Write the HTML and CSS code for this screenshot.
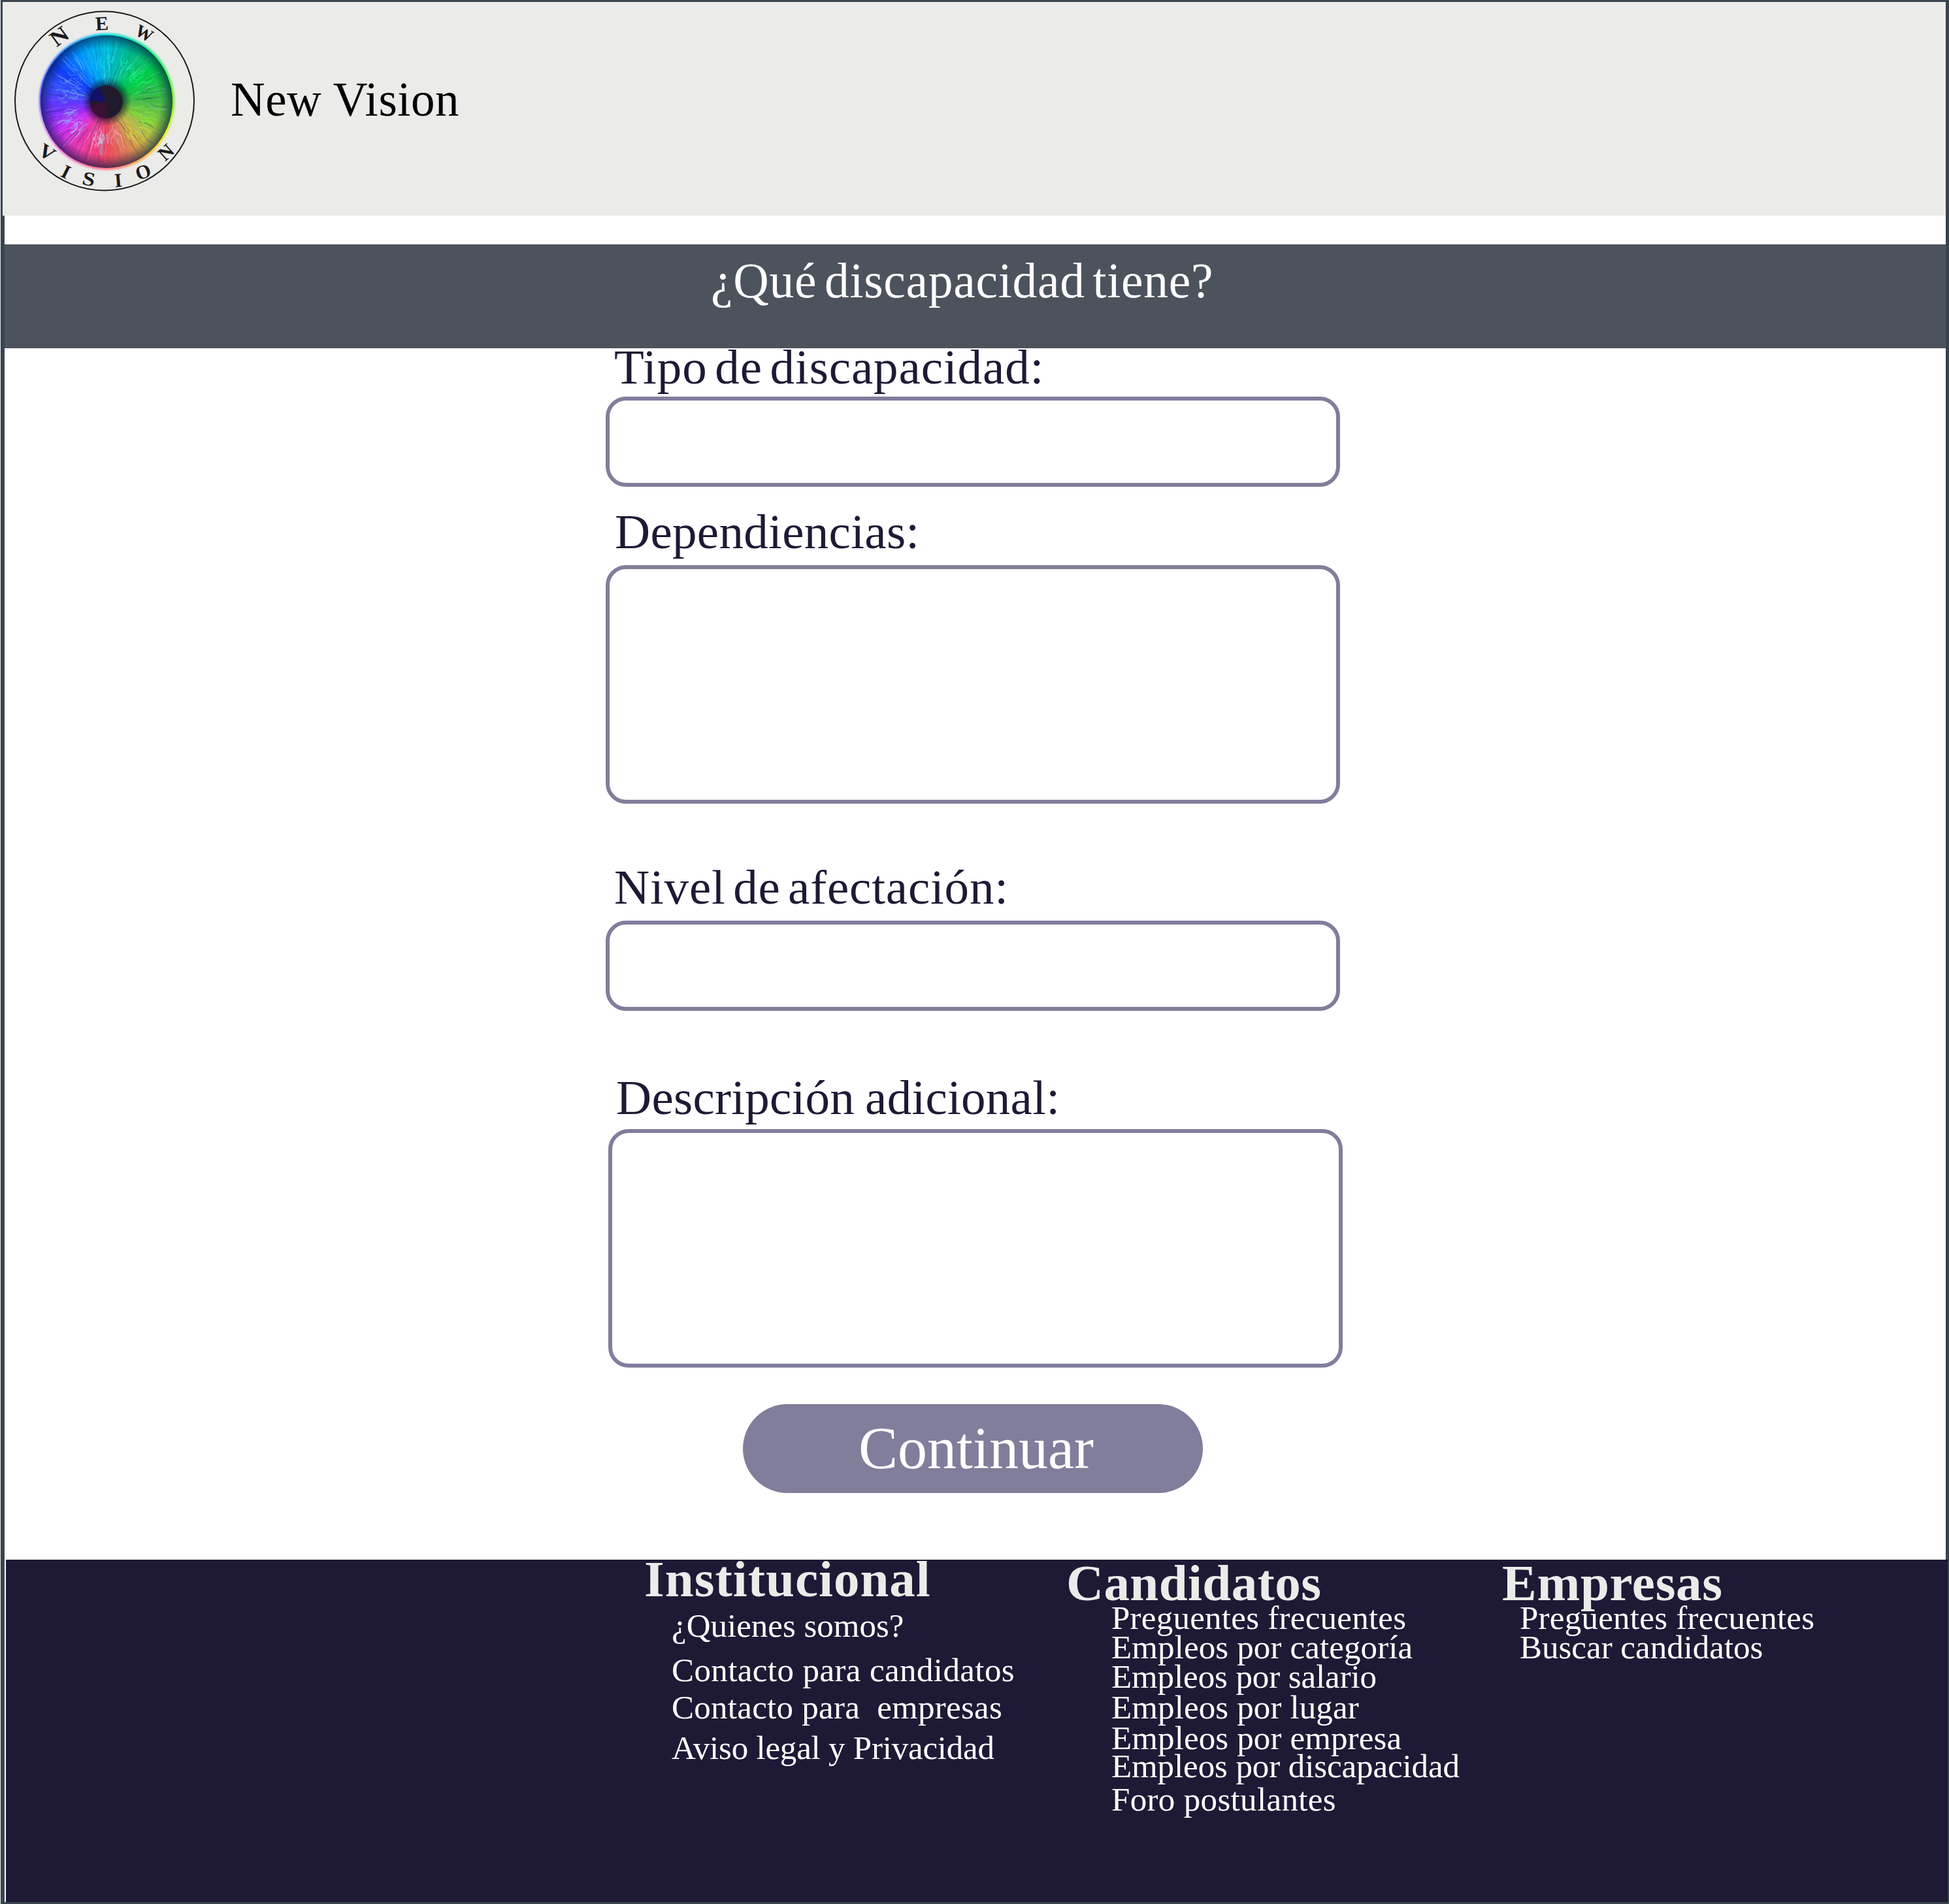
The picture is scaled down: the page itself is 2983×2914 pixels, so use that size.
FILE: index.html
```html
<!DOCTYPE html>
<html lang="es">
<head>
<meta charset="utf-8">
<title>New Vision</title>
<link rel="stylesheet" href="styles.css">
</head>
<body>
<div class="page">
  <header class="header">
    <div class="logo">
      <div class="iris-glow"></div>
      <div class="iris"></div>
      <svg class="logo-art" viewBox="0 0 316 327">
        <g id="fibres" class="fibres" fill="none" stroke-linecap="round"></g>
        <circle cx="158.500" cy="153" r="25" fill="#201a2c"/>
        <path d="M158.500 153L133.500 151A25 25 0 0 1 148 130Z" fill="#14106a"/>
        <path d="M158.500 153L160 178A25 25 0 0 1 134 158Z" fill="#3a1034"/>
        <circle cx="156" cy="151.500" r="137" fill="none" stroke="#1a1a1a" stroke-width="2"/>
        <g class="ring-text">
          <text transform="translate(87 53) rotate(-36) scale(1.1 1)" y="11" font-size="34">N</text>
          <text transform="translate(152 33) rotate(-3)" y="10">E</text>
          <text transform="translate(217 48) rotate(28)" y="9" font-size="27">W</text>
          <text transform="translate(68 230) rotate(33) scale(1.1 1)" y="10">V</text>
          <text transform="translate(97 260) rotate(27)" y="10">I</text>
          <text transform="translate(132 271) rotate(12) scale(1.15 1)" y="10">S</text>
          <text transform="translate(177 273) rotate(-5)" y="10">I</text>
          <text transform="translate(215 260) rotate(-20)" y="10">O</text>
          <text transform="translate(250 230) rotate(-42)" y="10">N</text>
        </g>
      </svg>
    </div>
    <div class="brand">New Vision</div>
  </header>
  <main class="main">
    <h1 class="title">¿Qué discapacidad tiene?</h1>
    <form class="form">
      <label class="label label-type" for="tipo">Tipo de discapacidad:</label>
      <input class="field" id="tipo">
      <label class="label label-deps" for="dep">Dependiencias:</label>
      <textarea class="field field-tall" id="dep"></textarea>
      <label class="label label-level" for="nivel">Nivel de afectación:</label>
      <input class="field" id="nivel">
      <label class="label label-desc" for="desc">Descripción adicional:</label>
      <textarea class="field field-tall field-desc" id="desc"></textarea>
      <button class="submit" type="button">Continuar</button>
    </form>
  </main>
  <footer class="footer">
    <section class="col col-inst">
      <h2>Institucional</h2>
      <ul>
        <li>¿Quienes somos?</li>
        <li>Contacto para candidatos</li>
        <li>Contacto para&nbsp; empresas</li>
        <li>Aviso legal y Privacidad</li>
      </ul>
    </section>
    <section class="col col-cand">
      <h2>Candidatos</h2>
      <ul>
        <li>Preguentes frecuentes</li>
        <li>Empleos por categoría</li>
        <li>Empleos por salario</li>
        <li>Empleos por lugar</li>
        <li>Empleos por empresa</li>
        <li>Empleos por discapacidad</li>
        <li>Foro postulantes</li>
      </ul>
    </section>
    <section class="col col-emp">
      <h2>Empresas</h2>
      <ul>
        <li>Preguentes frecuentes</li>
        <li>Buscar candidatos</li>
      </ul>
    </section>
  </footer>
</div>
<script src="iris.js"></script>
</body>
</html>
```
FILE: styles.css
```css
* { box-sizing: border-box; }
body {
  margin: 0;
  font-family: "Liberation Serif", serif;
  background: #39444f;
}
.page {
  width: 2983px;
  height: 2914px;
  padding-top: 3px;
  border-left: 1px solid #e6eeee;
  overflow: hidden;
  background: #39444f;
}
.header {
  display: flex;
  height: 327px;
  margin: 0 5px 0 3px;
  background: #ebebe9;
}
.logo {
  position: relative;
  width: 316px;
  height: 327px;
  flex: none;
}
.logo-art { position: absolute; inset: 0; width: 316px; height: 327px; }
.fibres { filter: blur(.5px); }
.iris-glow, .iris {
  position: absolute;
  border-radius: 50%;
}
.iris-glow {
  left: 56px;
  top: 48px;
  width: 207px;
  height: 209px;
  filter: blur(1.5px);
  background: conic-gradient(#00e0e0, #20f080 45deg, #80f020 90deg, #f0f000 120deg, #ffb040 145deg, #ff7080 180deg, #ff60d0 225deg, #c080ff 252deg, #3030ff 285deg, #2090ff 325deg, #00e0e0);
}
.iris {
  left: 58px;
  top: 51px;
  width: 202px;
  height: 203px;
  background:
    radial-gradient(circle, rgba(10, 10, 40, .7) 24px, rgba(10, 10, 60, 0) 38px, rgba(0, 20, 60, 0) 82px, rgba(0, 20, 70, .3) 92px, rgba(0, 25, 70, .65) 101px),
    conic-gradient(#00bcd8, #00b890 25deg, #00cc48 55deg, #38bc44 85deg, #84c83c 112deg, #ccb444 138deg, #e47454 160deg, #f04464 182deg, #ec38ac 212deg, #cc2cf4 238deg, #7030fc 262deg, #3850ff 285deg, #1040ff 305deg, #00a0fc 335deg, #00bcd8);
}
.ring-text {
  font-family: "Liberation Serif", serif;
  font-weight: 700;
  font-size: 30px;
  fill: #1a1a1a;
  text-anchor: middle;
}
.brand {
  padding-top: 110px;
  margin-left: 33px;
  font-size: 73px;
  line-height: 80px;
  letter-spacing: .5px;
  color: #000;
}
.main {
  height: 2057px;
  margin: 0 5px 0 6px;
  padding-top: 44px;
  background: #fff;
}
.title {
  height: 159px;
  margin: 0;
  padding: 16px 0 0 1081px;
  font-size: 75.500px;
  font-weight: 400;
  line-height: 80px;
  letter-spacing: .75px;
  word-spacing: -8px;
  color: #fff;
  background: #4d535d;
}
.form {
  display: flex;
  flex-direction: column;
  align-items: flex-start;
  margin-left: 920px;
}
.label {
  margin-left: 13px;
  font-size: 75px;
  line-height: 80px;
  color: #1e1935;
}
.label-type { margin-top: -11px; margin-bottom: 5px; letter-spacing: .9px; word-spacing: -8px; }
.label-deps { margin-top: 29px; margin-bottom: 11px; margin-left: 14px; letter-spacing: .3px; }
.label-level { margin-top: 88px; margin-bottom: 11px; letter-spacing: .8px; word-spacing: -8px; }
.label-desc { margin: 93px 0 8px 16px; letter-spacing: .25px; word-spacing: -3px; }
.field {
  width: 1124px;
  height: 138px;
  padding: 20px;
  border: 6px solid #807e9b;
  border-radius: 31px;
  background: #fff;
  resize: none;
  outline: none;
  font: inherit;
}
.field-tall { height: 365px; }
.field-desc { margin-left: 4px; }
.submit {
  width: 704px;
  height: 136px;
  margin: 56px 0 0 210px;
  padding: 0 0 0 10px;
  border: 0;
  border-radius: 68px;
  background: #807e9b;
  color: #fff;
  font-family: inherit;
  font-size: 90px;
  line-height: 128px;
}
.footer {
  display: flex;
  height: 524px;
  margin: 0 2px 0 6px;
  padding: 2px 0 0 977px;
  border-left: 2px solid #fff;
  background: #1e1935;
}
.col { flex: none; }
.col h2 {
  margin: 0;
  font-size: 79px;
  line-height: 56px;
  color: #ebebe9;
  white-space: nowrap;
}
.col ul { margin: 0; padding: 0; list-style: none; }
.col li {
  font-size: 51px;
  line-height: 43px;
  color: #fff;
  white-space: nowrap;
}
.col-inst { width: 646px; }
.col-inst h2 { letter-spacing: 1px; }
.col-inst ul { padding: 22px 0 0 42px; }
.col-inst li:nth-child(2) { margin-top: 25px; letter-spacing: .4px; }
.col-inst li:nth-child(3) { margin-top: 14px; letter-spacing: .27px; }
.col-inst li:nth-child(4) { margin-top: 19px; letter-spacing: -.22px; }
.col-cand { width: 667px; padding-top: 6px; }
.col-cand h2 { letter-spacing: .4px; }
.col-cand ul { padding: 4px 0 0 69px; }
.col-cand li:nth-child(1) { letter-spacing: .25px; }
.col-cand li:nth-child(2), .col-cand li:nth-child(3) { margin-top: 2px; }
.col-cand li:nth-child(2) { letter-spacing: .12px; }
.col-cand li:nth-child(3) { letter-spacing: -.1px; }
.col-cand li:nth-child(4), .col-cand li:nth-child(5) { margin-top: 4px; letter-spacing: .12px; }
.col-cand li:nth-child(6) { letter-spacing: -.1px; }
.col-cand li:nth-child(7) { margin-top: 8px; letter-spacing: .33px; }
.col-emp { padding-top: 6px; }
.col-emp h2 { letter-spacing: .7px; }
.col-emp ul { padding: 4px 0 0 27px; }
.col-emp li:nth-child(1) { letter-spacing: .25px; }
.col-emp li:nth-child(2) { margin-top: 2px; }
```
FILE: iris.js
```js
// Draws the radial fibres of the iris with a fixed seed.
const group = document.getElementById('fibres');
let seed = 7;
const rnd = () => (seed = (seed * 16807) % 2147483647) / 2147483647;
const cx = 158.5, cy = 153;
const add = (a, r1, r2, bend, colour, width, opacity) => {
  const p = (ang, r) => (cx + Math.sin(ang) * r).toFixed(1) + ' ' + (cy - Math.cos(ang) * r).toFixed(1);
  const path = document.createElementNS('http://www.w3.org/2000/svg', 'path');
  path.setAttribute('d', `M${p(a, r1)}Q${p(a + bend, (r1 + r2) / 2)} ${p(a + bend / 2, r2)}`);
  path.setAttribute('stroke', colour);
  path.setAttribute('stroke-width', width);
  path.setAttribute('stroke-opacity', opacity);
  group.appendChild(path);
};
for (let i = 0; i < 300; i++) {
  const a = rnd() * Math.PI * 2;
  const r1 = 26 + rnd() * 45;
  add(a, r1, Math.min(94, r1 + 12 + rnd() * 30), (rnd() - .5) * .2,
    rnd() < .4 ? '#10204c' : '#a8e4ff', (.5 + rnd() * 1).toFixed(2), (.1 + rnd() * .18).toFixed(2));
}
// Bright knots halfway out.
[[0, '#20f0ff'], [28, '#20ffc0'], [48, '#20ff80'], [68, '#10ff60'], [110, '#80ff30'], [136, '#e0e040'],
 [185, '#a0e8ff'], [198, '#ffc0e8'], [165, '#ffb0c0'], [230, '#b0c8ff'], [252, '#90c0ff'], [278, '#70b0ff'], [305, '#70a0ff']]
  .forEach(([deg, colour]) => {
    for (let i = 0; i < 10; i++) {
      const r = 42 + rnd() * 24;
      add((deg + (rnd() - .5) * 18) * Math.PI / 180, r, r + 6 + rnd() * 12, (rnd() - .5) * .35, colour, (1 + rnd() * 1.6).toFixed(2), .4);
    }
  });
```
